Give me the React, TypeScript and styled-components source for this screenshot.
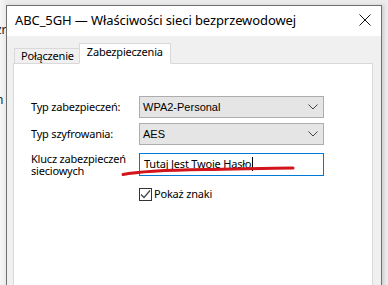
import React from 'react';
import styled, { createGlobalStyle } from 'styled-components';

const GlobalStyle = createGlobalStyle`
  html, body {
    margin: 0;
    padding: 0;
    background: #f3f3f3;
    overflow: hidden;
  }
  * {
    box-sizing: border-box;
  }
`;

const FONT = `"Noto Sans", "Open Sans", sans-serif`;

const Page = styled.div`
  position: relative;
  width: 388px;
  height: 285px;
  overflow: hidden;
  background: linear-gradient(90deg, #f6f6f6 0px, #ebebeb 6px);
  padding: 5px 0 0 6px;
  font-family: ${FONT};
  font-size: 11px;
  letter-spacing: -0.2px;
  color: #000;
`;

// text of the window lying behind the dialog
const BehindText = styled.span<{ $top: number }>`
  position: absolute;
  left: -4px;
  top: ${({ $top }) => $top}px;
  font-size: 12px;
  color: #222;
`;

const Window = styled.div`
  position: relative;
  width: 376px;
  height: 290px;
  border: 1px solid #6f6f6f;
  border-bottom: none;
  display: flex;
  flex-direction: column;
  background: #f0f0f0;
  box-shadow: 2px 0 3px rgba(0, 0, 0, 0.12);
`;

const TitleBar = styled.div`
  height: 30px;
  background: #fff;
  display: flex;
  align-items: center;
  justify-content: space-between;
  padding: 0 10px 0 8px;
`;

const Title = styled.div`
  font-size: 13px;
  letter-spacing: -0.1px;
  padding-bottom: 2px;
`;

const Close = styled.div`
  width: 12px;
  height: 12px;
  display: flex;
  margin-bottom: 3px;
`;

const Body = styled.div`
  flex: 1;
  padding: 7px 8px 0 6px;
  display: flex;
  flex-direction: column;
`;

const TabRow = styled.div`
  display: flex;
  align-items: flex-end;
  padding-left: 1px;
  height: 21px;
  position: relative;
  z-index: 1;
  margin-bottom: -1px;
`;

const Tab = styled.div<{ $active?: boolean }>`
  height: ${({ $active }) => ($active ? 21 : 16)}px;
  padding: ${({ $active }) => ($active ? '0 7px 3px 7px' : '0 5px 0 6px')};
  margin-left: ${({ $active }) => ($active ? -1 : 0)}px;
  border: 1px solid #d9d9d9;
  border-bottom: ${({ $active }) => ($active ? '1px solid #fff' : '1px solid #d9d9d9')};
  background: ${({ $active }) => ($active ? '#fff' : '#f0f0f0')};
  display: flex;
  align-items: center;
  line-height: 14px;
`;

const Panel = styled.div`
  flex: 1;
  background: #fff;
  border: 1px solid #d9d9d9;
  border-bottom: none;
  padding: 32px 0 0 17px;
`;

const Form = styled.div`
  display: grid;
  grid-template-columns: 108px 185px;
  row-gap: 5px;
  align-items: center;
`;

const Label = styled.div<{ $top?: boolean }>`
  align-self: ${({ $top }) => ($top ? 'start' : 'center')};
  line-height: ${({ $top }) => ($top ? '12px' : '14px')};
  padding-top: ${({ $top }) => ($top ? 2 : 0)}px;
  margin-top: ${({ $top }) => ($top ? 1 : 0)}px;
  white-space: nowrap;
`;

const Select = styled.div`
  height: 22px;
  background: #e5e5e5;
  border: 1px solid #adadad;
  display: flex;
  align-items: center;
  justify-content: space-between;
  padding: 0 5px 0 3px;
  font-family: "Liberation Sans", Arial, sans-serif;
  font-size: 11px;
  letter-spacing: 0;
`;

const Input = styled.div`
  height: 23px;
  margin-top: 1px;
  border: 1px solid #0078d7;
  display: flex;
  align-items: center;
  padding: 0 4px 1px 4px;
  background: #fff;
`;

const Caret = styled.span`
  display: inline-block;
  width: 1px;
  height: 14px;
  background: #000;
  margin-left: 1px;
`;

const CheckRow = styled.label`
  grid-column: 2;
  display: flex;
  align-items: center;
  gap: 2px;
  height: 14px;
  line-height: 14px;
  margin-top: 5px;
`;

const Box = styled.span`
  width: 13px;
  height: 13px;
  border: 1px solid #333;
  background: #fff;
  display: flex;
  align-items: center;
  justify-content: center;
`;

const Marker = styled.svg`
  position: absolute;
  left: 0;
  top: 0;
  pointer-events: none;
`;

const Chevron = () => (
  <svg width="10" height="6" viewBox="0 0 10 6">
    <path d="M0.5 0.5 L5 5 L9.5 0.5" fill="none" stroke="#444" strokeWidth="1" />
  </svg>
);

export default function App() {
  return (
    <>
      <GlobalStyle />
      <Page>
        <BehindText $top={21}>zr</BehindText>
        <BehindText $top={91}>n</BehindText>
        <Window>
          <TitleBar>
            <Title>ABC_5GH — Właściwości sieci bezprzewodowej</Title>
            <Close>
              <svg width="12" height="12" viewBox="0 0 12 12">
                <path d="M0.5 0.5 L11.5 11.5 M11.5 0.5 L0.5 11.5" stroke="#111" strokeWidth="1" />
              </svg>
            </Close>
          </TitleBar>
          <Body>
            <TabRow>
              <Tab>Połączenie</Tab>
              <Tab $active>Zabezpieczenia</Tab>
            </TabRow>
            <Panel>
              <Form>
                <Label>Typ zabezpieczeń:</Label>
                <Select>
                  WPA2-Personal
                  <Chevron />
                </Select>
                <Label>Typ szyfrowania:</Label>
                <Select>
                  AES
                  <Chevron />
                </Select>
                <Label $top>
                  Klucz zabezpieczeń
                  <br />
                  sieciowych
                </Label>
                <Input>
                  Tutaj Jest Twoje Hasło
                  <Caret />
                </Input>
                <CheckRow>
                  <Box>
                    <svg width="11" height="11" viewBox="0 0 11 11">
                      <path d="M1 5.5 L4 8.5 L10 1.5" fill="none" stroke="#444" strokeWidth="1.2" />
                    </svg>
                  </Box>
                  Pokaż znaki
                </CheckRow>
              </Form>
            </Panel>
          </Body>
        </Window>
        <Marker width="388" height="285" viewBox="0 0 388 285">
          <path
            d="M123 174.5 C 140 171, 170 170, 205 169.5 S 270 168, 293 168"
            fill="none"
            stroke="#d3141b"
            strokeWidth="3"
            strokeLinecap="round"
          />
        </Marker>
      </Page>
    </>
  );
}
